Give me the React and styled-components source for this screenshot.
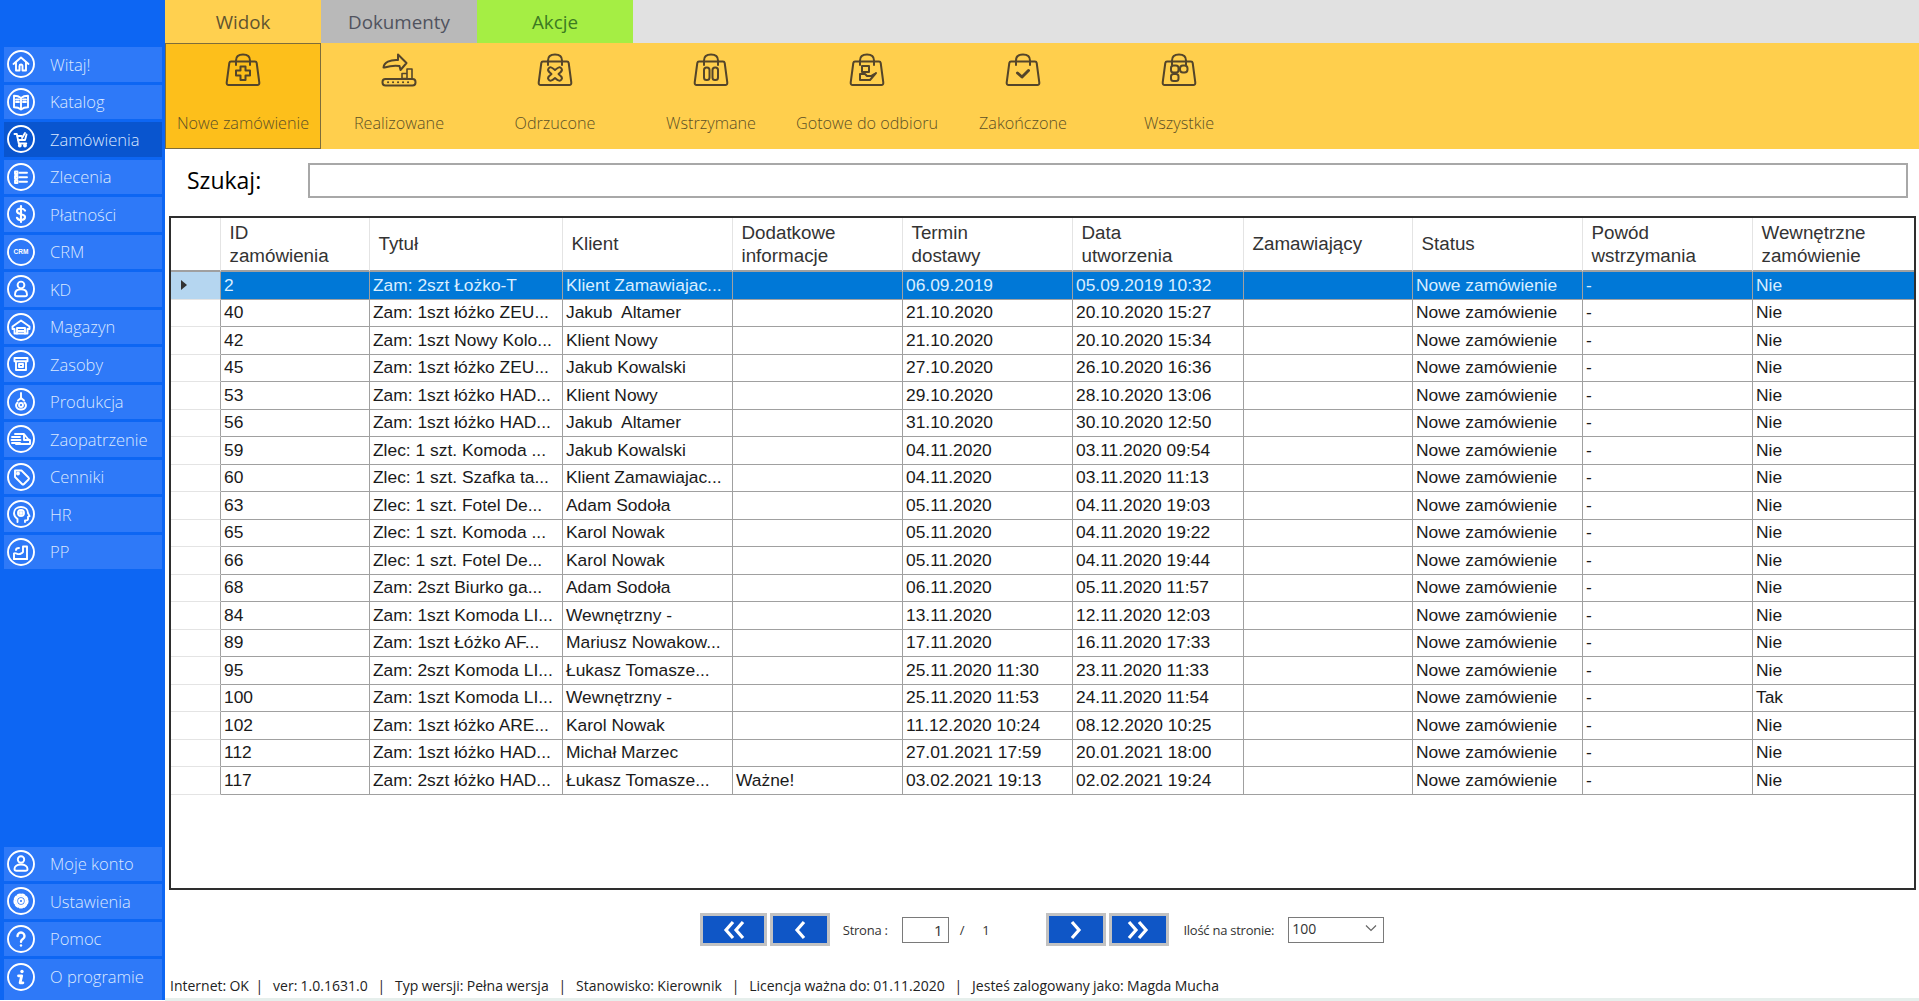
import React from 'react';
import styled, { createGlobalStyle } from 'styled-components';

const NAV_TOP = [
  ['Witaj!', <><path d="M6.5 14 14 7.5l7.5 6.5" /><path d="M9 12.5V20.5h3.5V16a1.5 1.5 0 0 1 3 0v4.5H19v-8" /></>],
  ['Katalog', <><path d="M14 10c-2-1.6-4.5-2.2-7-2.2v11.5c2.5 0 5 .6 7 2.2 2-1.6 4.5-2.2 7-2.2V7.8c-2.5 0-5 .6-7 2.2zM14 10v11.5" /><path d="M9 11.5h3M9 14h3M16 11.5h3M16 14h3" /></>],
  ['Zamówienia', <><path d="M7.5 9h2.3l2 9.5h7.5" /><path d="M10.5 11h4M11 15h7l1.5-5.5" /><path d="M15 13l3-5" /><circle cx="12.8" cy="20.5" r="1" /><circle cx="18" cy="20.5" r="1" /></>],
  ['Zlecenia', <><path d="M8 8.5h2.5V11H8zM8 13h2.5v2.5H8zM8 17.5h2.5V20H8z" /><path d="M12.5 9.8H20M12.5 14.3H20M12.5 18.8H20" /></>],
  ['Płatności', <><path strokeWidth="2.2" d="M18 10.5c-.8-1.3-2.2-2-4-2-2.2 0-4 1-4 2.8 0 4 8 2 8 5.8 0 1.8-1.8 2.9-4 2.9-1.9 0-3.4-.8-4-2.2M14 6v16" /></>],
  ['CRM', <text x="14" y="16" textAnchor="middle" fontSize="6.5" fontWeight="700" fontFamily="Liberation Sans, sans-serif" fill="#fff" stroke="none">CRM</text>],
  ['KD', <><circle cx="14" cy="10" r="3.4" /><path d="M8 19.5c0-3 2-5.2 6-5.2s6 2.2 6 5.2c0 1.2-1 1.8-2 1.8h-8c-1 0-2-.6-2-1.8z" /></>],
  ['Magazyn', <><path d="M5.5 13.5 14 7.5l8.5 6v2.5h-2V20.5H7.5V16h-2z" /><path d="M10 20.5V15h8v5.5M10 18h8" /></>],
  ['Zasoby', <><path d="M7.5 8h13v3.3h-13zM9 11.3V20h10v-8.7" /><path d="M12 14h4v3h-4z" /></>],
  ['Produkcja', <><path d="M14 5v5" /><path d="M11 12.5 14 10l3 2.5" /><path d="M10.5 14.5c-3 3-1 7 3.5 7s6.5-4 3.5-7" /><circle cx="14" cy="17" r="2" /></>],
  ['Zaopatrzenie', <><path d="M8 9h9l4 5 2 1v4H9" /><path d="M5 12h8M4.5 15h9M5 18h8M17 10v5h5" /></>],
  ['Cenniki', <><path d="M8 7.5h6.5l7 7c.6.6.6 1.4 0 2L17 21c-.6.6-1.4.6-2 0l-7-7z" /><circle cx="11" cy="10.5" r="1" /></>],
  ['HR', <><path d="M10.5 22v-3c-2-1.5-3.5-3.3-3.5-5.8C7 9.5 10 7 14 7s7 2.5 7 6.2l1.5 3-1.5.6V19c0 1-1 1.5-3 1.5V22" /><circle cx="14" cy="13" r="3" /><circle cx="14" cy="13" r="1" /></>],
  ['PP', <><path d="M7 21v-5.5c1.5-1.5 3.5 1.5 6 .5 2-.8 2.5-1 3-2V8.5h4V21z" /><path d="M9 12c0-1.5 1.5-2 3-2" /><path d="M7 21h13" /></>],
];

const NAV_BOTTOM = [
  ['Moje konto', <><circle cx="14" cy="9.5" r="3.2" /><path d="M7.5 19c0-2.5 2.5-4.5 6.5-4.5s6.5 2 6.5 4.5c0 1.2-1 1.8-2 1.8h-9c-1 0-2-.6-2-1.8z" /></>],
  ['Ustawienia', <><circle cx="14" cy="14" r="6.3" strokeWidth="2.6" strokeDasharray="2.2 2.1" /><circle cx="14" cy="14" r="4.6" /><circle cx="14" cy="14" r="2" /></>],
  ['Pomoc', <><path strokeWidth="2.4" d="M10.5 11a3.5 3.5 0 1 1 5.3 3c-1.2.8-1.8 1.3-1.8 2.8" /><circle cx="14" cy="20.5" r="1.2" fill="#fff" stroke="none" /></>],
  ['O programie', <><circle cx="15" cy="8.5" r="1.7" fill="#fff" stroke="none" /><path strokeWidth="2.8" d="M11.5 12.8h3.2l-1.6 7h2.8" /></>],
];

const Bag = ({ children }) => (
  <BagIcon viewBox="0 0 36 34" fill="none">
    <path d="M6 8.5h24c1 0 1.5.5 1.7 1.5l2.6 19.5c.2 1.5-.6 2.5-2 2.5H3.7c-1.4 0-2.2-1-2-2.5L4.3 10c.2-1 .7-1.5 1.7-1.5z" />
    <path d="M11 12V7.5C11 3.5 14 1.5 18 1.5s7 2 7 6V12" />
    {children}
  </BagIcon>
);

const Conveyor = () => (
  <BagIcon viewBox="0 0 36 34" fill="none">
    <path d="M2.5 14.5C3 9.5 9 6.5 17 7V1.5l8.5 8.5-6 7-1-4c-6-1-10 0-15 1.5z" />
    <path d="M21 20.5h5v5h-5zM26 21.5V16h5v9.5" strokeWidth="1.6" />
    <rect x="1.5" y="26" width="33" height="6.5" rx="3" />
    <path d="M7 29.3h.1M12 29.3h.1M17 29.3h.1M22 29.3h.1M27 29.3h.1" />
  </BagIcon>
);

const RIBBON = [
  ['Nowe zamówienie', <Bag><path d="M15.5 13.5h5v4h4.5v5h-4.5v4.5h-5V22.5H11v-5h4.5z" /></Bag>],
  ['Realizowane', <Conveyor />],
  ['Odrzucone', <Bag><path d="M11.5 15.5c1.5-2 3-1.5 6.5 1.5 3.5-3 5-3.5 6.5-1.5s-.5 3.5-3 5.5c2.5 2 4.5 3.5 3 5.5s-3 1.5-6.5-1.5c-3.5 3-5 3.5-6.5 1.5s.5-3.5 3-5.5c-2.5-2-4.5-3.5-3-5.5z" /></Bag>],
  ['Wstrzymane', <Bag><rect x="11" y="14.5" width="5.5" height="12.5" rx="2.5" /><rect x="19.5" y="14.5" width="5.5" height="12.5" rx="2.5" /></Bag>],
  ['Gotowe do odbioru', <Bag><path d="M13 13h7v6h-7z" /><path d="M11 21h5l2 2h4l5-3-6 7h-10z" /></Bag>],
  ['Zakończone', <Bag><path d="M12.5 20l4.5 4 6.500-6.5" strokeWidth="3" /></Bag>],
  ['Wszystkie', <Bag><rect x="10" y="12.5" width="7.5" height="7" rx="2.5" /><rect x="19" y="12.5" width="7.5" height="7" rx="3" /><rect x="10" y="21" width="7.5" height="7" rx="2.5" /></Bag>],
];

const HEADERS = ['ID\nzamówienia', 'Tytuł', 'Klient', 'Dodatkowe\ninformacje', 'Termin\ndostawy', 'Data\nutworzenia', 'Zamawiający', 'Status', 'Powód\nwstrzymania', 'Wewnętrzne\nzamówienie'];

const ORDERS = [
  ['2', 'Zam: 2szt Łożko-T', 'Klient Zamawiajac...', '', '06.09.2019', '05.09.2019 10:32'],
  ['40', 'Zam: 1szt łóżko ZEU...', 'Jakub  Altamer', '', '21.10.2020', '20.10.2020 15:27'],
  ['42', 'Zam: 1szt Nowy Kolo...', 'Klient Nowy', '', '21.10.2020', '20.10.2020 15:34'],
  ['45', 'Zam: 1szt łóżko ZEU...', 'Jakub Kowalski', '', '27.10.2020', '26.10.2020 16:36'],
  ['53', 'Zam: 1szt łóżko HAD...', 'Klient Nowy', '', '29.10.2020', '28.10.2020 13:06'],
  ['56', 'Zam: 1szt łóżko HAD...', 'Jakub  Altamer', '', '31.10.2020', '30.10.2020 12:50'],
  ['59', 'Zlec: 1 szt. Komoda ...', 'Jakub Kowalski', '', '04.11.2020', '03.11.2020 09:54'],
  ['60', 'Zlec: 1 szt. Szafka ta...', 'Klient Zamawiajac...', '', '04.11.2020', '03.11.2020 11:13'],
  ['63', 'Zlec: 1 szt. Fotel De...', 'Adam Sodoła', '', '05.11.2020', '04.11.2020 19:03'],
  ['65', 'Zlec: 1 szt. Komoda ...', 'Karol Nowak', '', '05.11.2020', '04.11.2020 19:22'],
  ['66', 'Zlec: 1 szt. Fotel De...', 'Karol Nowak', '', '05.11.2020', '04.11.2020 19:44'],
  ['68', 'Zam: 2szt Biurko ga...', 'Adam Sodoła', '', '06.11.2020', '05.11.2020 11:57'],
  ['84', 'Zam: 1szt Komoda LI...', 'Wewnętrzny -', '', '13.11.2020', '12.11.2020 12:03'],
  ['89', 'Zam: 1szt Łóżko AF...', 'Mariusz Nowakow...', '', '17.11.2020', '16.11.2020 17:33'],
  ['95', 'Zam: 2szt Komoda LI...', 'Łukasz Tomasze...', '', '25.11.2020 11:30', '23.11.2020 11:33'],
  ['100', 'Zam: 1szt Komoda LI...', 'Wewnętrzny -', '', '25.11.2020 11:53', '24.11.2020 11:54', 'Tak'],
  ['102', 'Zam: 1szt łóżko ARE...', 'Karol Nowak', '', '11.12.2020 10:24', '08.12.2020 10:25'],
  ['112', 'Zam: 1szt łóżko HAD...', 'Michał Marzec', '', '27.01.2021 17:59', '20.01.2021 18:00'],
  ['117', 'Zam: 2szt łóżko HAD...', 'Łukasz Tomasze...', 'Ważne!', '03.02.2021 19:13', '02.02.2021 19:24'],
];

const Chevrons = ({ left, double }) => (
  <svg width="30" height="22" viewBox="0 0 30 22" fill="none" stroke="#fff" strokeWidth="3.2">
    <g transform={left ? 'translate(30 0) scale(-1 1)' : undefined}>
      {double ? <path d="M5 3l7 8-7 8M15 3l7 8-7 8" /> : <path d="M11 3l7 8-7 8" />}
    </g>
  </svg>
);

const NavItem = ({ label, icon, active }) => (
  <NavButton $active={active}>
    <NavIcon viewBox="0 0 28 28" fill="none">
      <circle cx="14" cy="14" r="13" />
      {icon}
    </NavIcon>
    {label}
  </NavButton>
);

const App = () => (
  <Page>
    <GlobalStyle />
    <Sidebar>
      <NavGroup>
        {NAV_TOP.map(([label, icon]) => (
          <NavItem key={label} label={label} icon={icon} active={label === 'Zamówienia'} />
        ))}
      </NavGroup>
      <NavGroup>
        {NAV_BOTTOM.map(([label, icon]) => (
          <NavItem key={label} label={label} icon={icon} />
        ))}
      </NavGroup>
    </Sidebar>

    <Main>
      <Tabs>
        <Tab $bg="#ffd04f" $color="#5f5430">Widok</Tab>
        <Tab $bg="#b9b9b9" $color="#50535e">Dokumenty</Tab>
        <Tab $bg="#a5ee44" $color="#3c7a22">Akcje</Tab>
      </Tabs>

      <Ribbon>
        {RIBBON.map(([label, icon], i) => (
          <RibbonItem key={label} $active={i === 0}>
            {icon}
            <span>{label}</span>
          </RibbonItem>
        ))}
      </Ribbon>

      <SearchBar>
        <SearchLabel>Szukaj:</SearchLabel>
        <SearchInput />
      </SearchBar>

      <Grid>
        <HeaderRow>
          <HeaderCell />
          {HEADERS.map((h) => (
            <HeaderCell key={h}>{h}</HeaderCell>
          ))}
        </HeaderRow>
        {ORDERS.map((o, i) => (
          <Row key={o[0]} $selected={i === 0}>
            <RowHead $selected={i === 0}>{i === 0 && <Caret />}</RowHead>
            <Cell>{o[0]}</Cell>
            <Cell>{o[1]}</Cell>
            <Cell>{o[2]}</Cell>
            <Cell>{o[3]}</Cell>
            <Cell>{o[4]}</Cell>
            <Cell>{o[5]}</Cell>
            <Cell />
            <Cell>Nowe zamówienie</Cell>
            <Cell>-</Cell>
            <Cell>{o[6] || 'Nie'}</Cell>
          </Row>
        ))}
      </Grid>

      <Pager>
        <PageButton $wide><Chevrons left double /></PageButton>
        <PageButton><Chevrons left /></PageButton>
        <PagerText $ml={10}>Strona :</PagerText>
        <PageInput $ml={11}>1</PageInput>
        <PagerText $ml={8}>/</PagerText>
        <PagerText $ml={15}>1</PagerText>
        <PageButton $ml={54}><Chevrons /></PageButton>
        <PageButton><Chevrons double /></PageButton>
        <PagerText $ml={11}>Ilość na stronie:</PagerText>
        <PageSelect $ml={11}>
          100
          <svg width="12" height="8" viewBox="0 0 12 8" fill="none" stroke="#666" strokeWidth="1.2">
            <path d="M1 1.5l5 5 5-5" />
          </svg>
        </PageSelect>
      </Pager>

      <StatusBar>
        {'Internet: OK  |   ver: 1.0.1631.0   |   Typ wersji: Pełna wersja   |   Stanowisko: Kierownik   |   Licencja ważna do: 01.11.2020   |   Jesteś zalogowany jako: Magda Mucha'}
      </StatusBar>
    </Main>
  </Page>
);

// Styled-components
const GlobalStyle = createGlobalStyle`
  html, body {
    margin: 0;
    height: 100%;
    overflow: hidden;
    background: #fff;
  }
`;

const Page = styled.div`
  display: flex;
  width: 1919px;
  height: 1001px;
  font-family: 'Open Sans', sans-serif;
`;

const Sidebar = styled.aside`
  width: 165px;
  height: 1000px;
  flex: none;
  box-sizing: border-box;
  padding: 47px 3px 0 4px;
  display: flex;
  flex-direction: column;
  justify-content: space-between;
  background: #0d66f3;
`;

const NavGroup = styled.nav`
  display: flex;
  flex-direction: column;
  gap: 3px;
`;

const NavButton = styled.div`
  display: flex;
  align-items: center;
  gap: 15px;
  height: 34.5px;
  padding-left: 3px;
  color: #dbe8ff;
  font-size: 16.5px;
  font-weight: 300;
  white-space: nowrap;
  background: ${(p) => (p.$active ? '#0955cf' : '#2e79f8')};

  nav:last-child > &:last-child {
    height: 41px;
    padding-bottom: 6px;
    box-sizing: border-box;
  }
`;

const NavIcon = styled.svg`
  width: 28px;
  height: 28px;
  flex: none;
  stroke: #fff;
  stroke-width: 1.9;
  stroke-linejoin: round;
  stroke-linecap: round;
`;

const Main = styled.main`
  flex: 1;
  min-width: 0;
  display: flex;
  flex-direction: column;
`;

const Tabs = styled.div`
  display: flex;
  height: 43px;
  background: #e1e1e1;
`;

const Tab = styled.div`
  width: 156px;
  display: flex;
  align-items: center;
  justify-content: center;
  font-size: 18.8px;
  color: ${(p) => p.$color};
  background: ${(p) => p.$bg};
`;

const Ribbon = styled.div`
  display: flex;
  height: 106px;
  background: #ffcf4d;
`;

const RibbonItem = styled.div`
  width: 156px;
  box-sizing: border-box;
  display: flex;
  flex-direction: column;
  align-items: center;
  padding-top: 9px;
  color: #5c4f26;
  font-size: 16.2px;
  font-weight: 300;
  white-space: nowrap;
  border: 1px solid ${(p) => (p.$active ? '#7d6c3a' : 'transparent')};
  background: ${(p) => (p.$active ? '#fdbf1b' : 'transparent')};

  span {
    margin-top: 25px;
  }
`;

const BagIcon = styled.svg`
  width: 36px;
  height: 34px;
  stroke: #54452a;
  stroke-width: 2;
  stroke-linejoin: round;
  stroke-linecap: round;
`;

const SearchBar = styled.div`
  display: flex;
  align-items: center;
  height: 67px;
  padding: 0 11px 5px 22px;
  box-sizing: border-box;
`;

const SearchLabel = styled.div`
  width: 121px;
  font-size: 23px;
  color: #000;
`;

const SearchInput = styled.div`
  flex: 1;
  height: 35px;
  box-sizing: border-box;
  border: 2px solid #a8a8a8;
  background: #fff;
`;

const Grid = styled.div`
  height: 674px;
  box-sizing: border-box;
  margin: 0 3px 0 4px;
  border: 2px solid #2e2e2e;
  overflow: hidden;
  font-family: 'Liberation Sans', Arial, sans-serif;
`;

const columns = '50px 149px 193px 170px 170px 170px 171px 169px 170px 170px 1fr';

const HeaderRow = styled.div`
  display: grid;
  grid-template-columns: ${columns};
  height: 54px;
`;

const HeaderCell = styled.div`
  display: flex;
  align-items: center;
  padding: 1px 8px 0 8.5px;
  white-space: pre-line;
  font-size: 18.8px;
  line-height: 22.5px;
  color: #333;
  border-right: 1px solid #e4e4e4;
  border-bottom: 2px solid #a0a0a0;
  &:last-child {
    border-right: 0;
  }
`;

const Row = styled.div`
  display: grid;
  grid-template-columns: ${columns};
  height: 27.5px;
  font-size: 17.4px;
  color: ${(p) => (p.$selected ? '#d9eeff' : '#1a1a1a')};
  background: ${(p) => (p.$selected ? '#0078d7' : '#fff')};
`;

const RowHead = styled.div`
  display: flex;
  align-items: center;
  padding-left: 10px;
  border-right: 1px solid #a0a0a0;
  border-bottom: 1px solid #e4e4e4;
  background: ${(p) => (p.$selected ? '#b5d6f0' : '#fff')};
`;

const Caret = styled.div`
  width: 0;
  height: 0;
  border-left: 6px solid #333;
  border-top: 5px solid transparent;
  border-bottom: 5px solid transparent;
`;

const Cell = styled.div`
  display: flex;
  align-items: center;
  padding-left: 3px;
  white-space: pre;
  overflow: hidden;
  border-right: 1px solid #a0a0a0;
  border-bottom: 1px solid #a0a0a0;
  &:last-child {
    border-right: 0;
  }
`;

const Pager = styled.div`
  display: flex;
  align-items: center;
  justify-content: center;
  gap: 3px;
  margin-top: 23px;
  height: 33px;
`;

const PageButton = styled.div`
  width: ${(p) => (p.$wide ? 67 : 60)}px;
  height: 33px;
  box-sizing: border-box;
  display: flex;
  align-items: center;
  justify-content: center;
  margin-left: ${(p) => p.$ml || 0}px;
  background: #0f56c6;
  border: 3px solid #c2c2c2;
`;

const PagerText = styled.div`
  margin-left: ${(p) => p.$ml || 0}px;
  font-size: 13px;
  letter-spacing: -0.25px;
  color: #333;
  white-space: nowrap;
`;

const PageInput = styled.div`
  width: 47px;
  height: 26px;
  box-sizing: border-box;
  margin-left: ${(p) => p.$ml || 0}px;
  padding-right: 5px;
  text-align: right;
  line-height: 24px;
  font-size: 15px;
  color: #333;
  border: 1px solid #7a7a7a;
`;

const PageSelect = styled.div`
  width: 96px;
  height: 26px;
  box-sizing: border-box;
  margin-left: ${(p) => p.$ml || 0}px;
  padding: 0 6px 3px 3px;
  display: flex;
  align-items: center;
  justify-content: space-between;
  font-size: 14px;
  color: #333;
  border: 1px solid #7a7a7a;
`;

const StatusBar = styled.div`
  margin-top: auto;
  height: 31px;
  padding: 4px 0 0 5px;
  font-size: 14px;
  word-spacing: -0.35px;
  line-height: 24px;
  color: #222;
  white-space: pre;
  border-bottom: 3px solid #e6efec;
  box-sizing: border-box;
`;

export default App;
